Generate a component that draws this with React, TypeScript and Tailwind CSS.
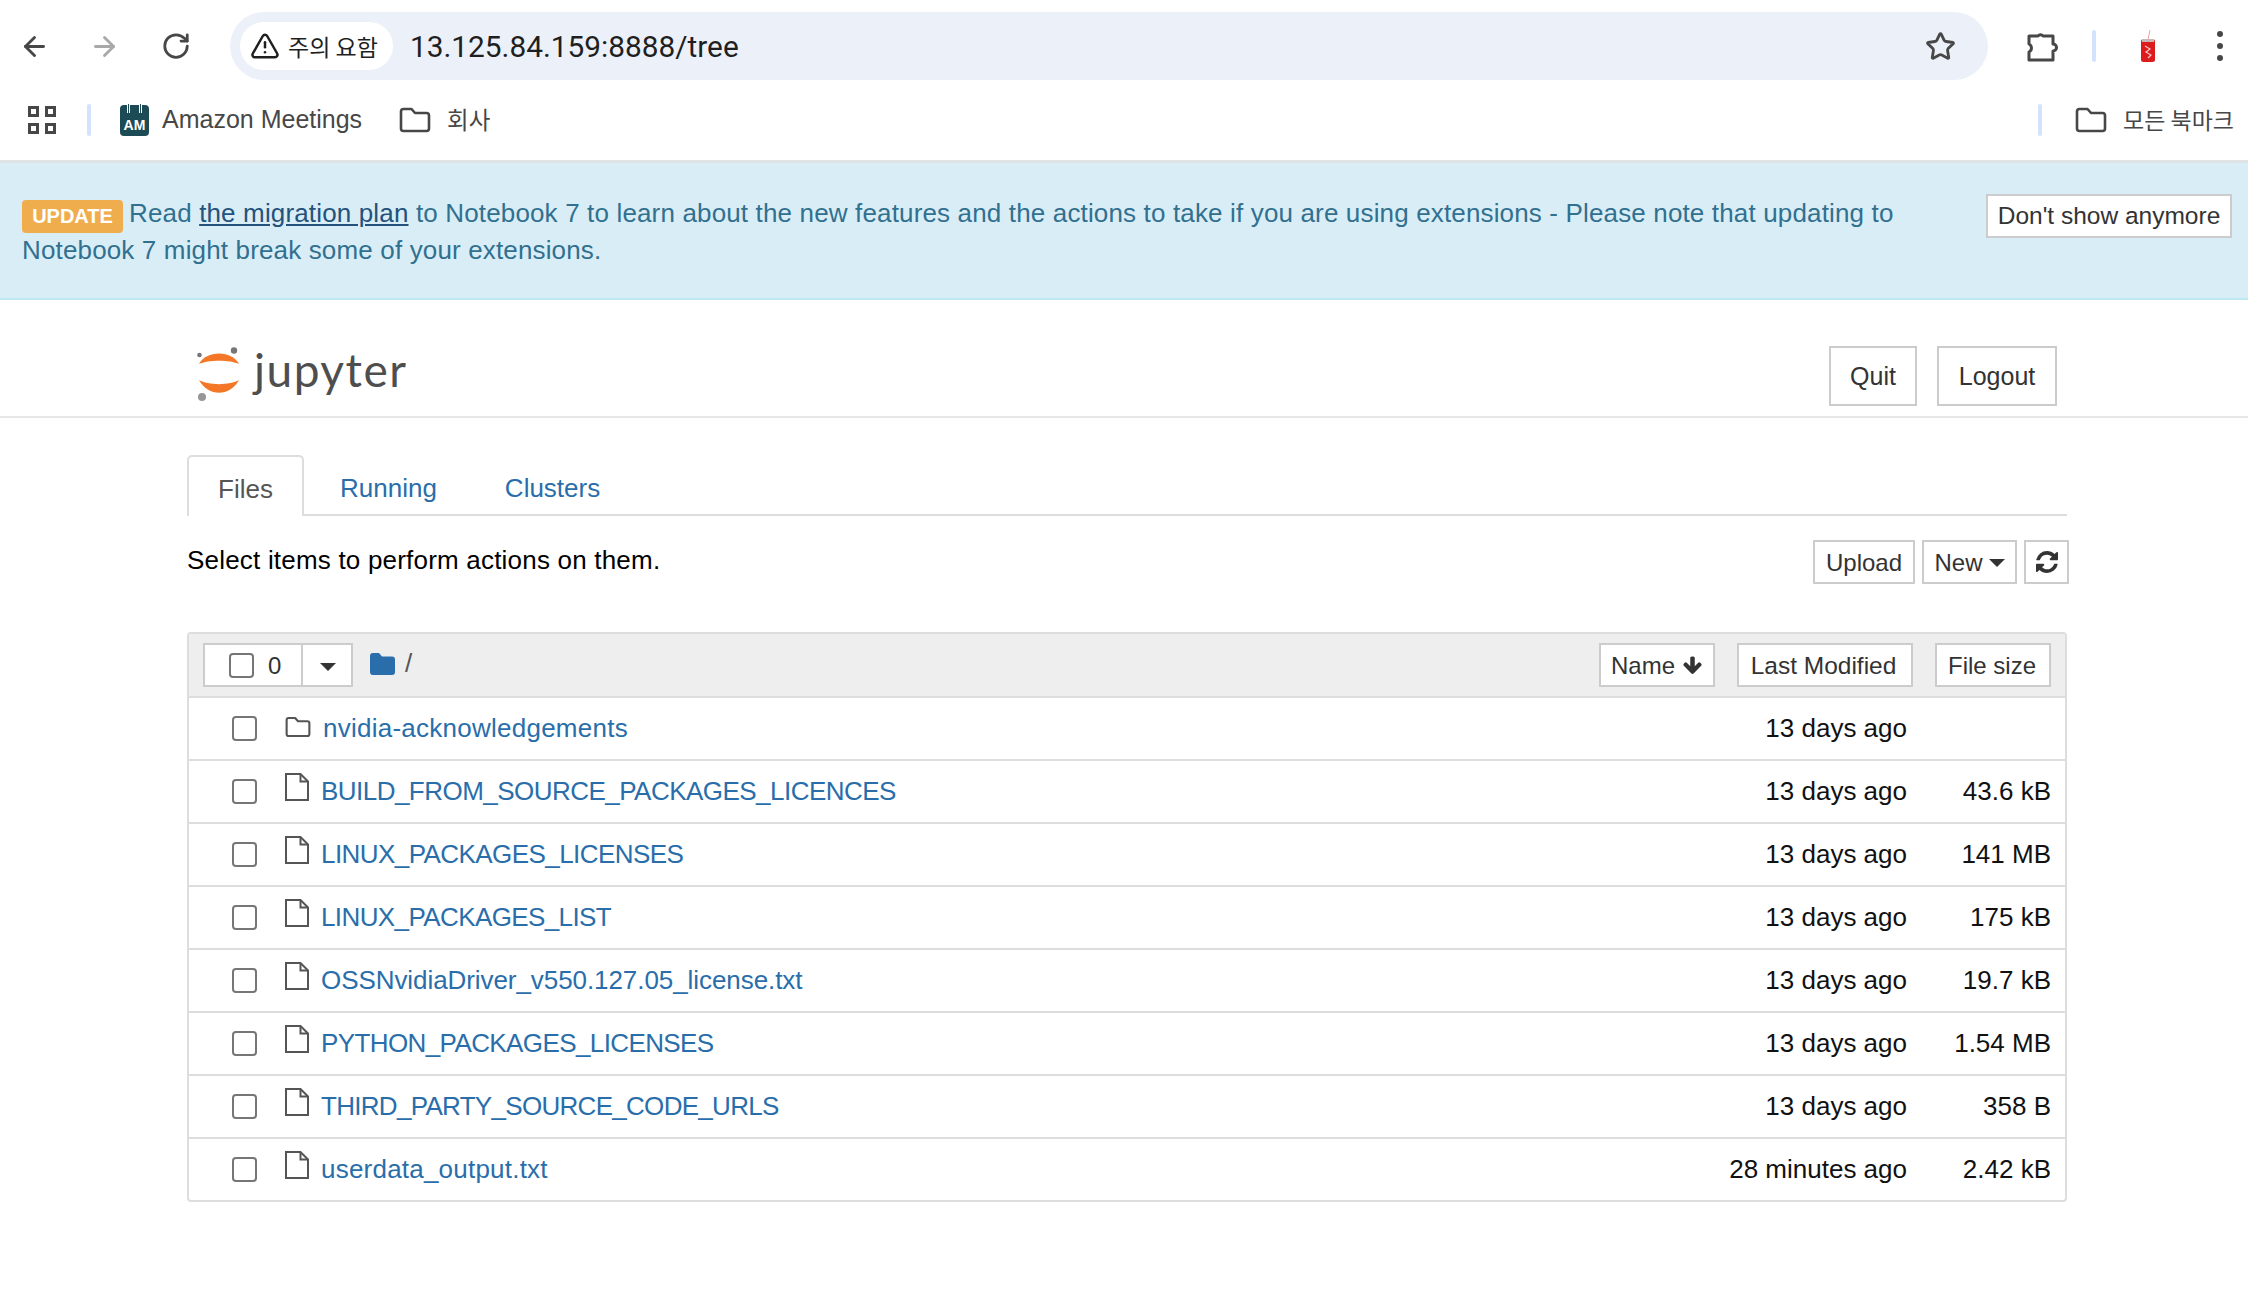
import { ArrowLeft, ArrowRight, RotateCw, TriangleAlert, Star } from 'lucide-react';

const rows = [
  { name: 'nvidia-acknowledgements', dir: true, modified: '13 days ago', size: '', fit: 'tracking-[0.25px]' },
  { name: 'BUILD_FROM_SOURCE_PACKAGES_LICENCES', modified: '13 days ago', size: '43.6 kB', fit: 'tracking-[-0.53px]' },
  { name: 'LINUX_PACKAGES_LICENSES', modified: '13 days ago', size: '141 MB', fit: 'tracking-[-0.56px]' },
  { name: 'LINUX_PACKAGES_LIST', modified: '13 days ago', size: '175 kB', fit: 'tracking-[-0.6px]' },
  { name: 'OSSNvidiaDriver_v550.127.05_license.txt', modified: '13 days ago', size: '19.7 kB', fit: 'tracking-[-0.07px]' },
  { name: 'PYTHON_PACKAGES_LICENSES', modified: '13 days ago', size: '1.54 MB', fit: 'tracking-[-0.6px]' },
  { name: 'THIRD_PARTY_SOURCE_CODE_URLS', modified: '13 days ago', size: '358 B', fit: 'tracking-[-0.7px]' },
  { name: 'userdata_output.txt', modified: '28 minutes ago', size: '2.42 kB', fit: 'tracking-[0.22px]' },
];

function FolderOutline({ className }: { className: string }) {
  return (
    <svg className={className} viewBox="0 0 32 26" fill="none" stroke="currentColor" strokeWidth="2.6" strokeLinejoin="round">
      <path d="M2 4.500a2.500 2.500 0 0 1 2.500-2.500h8l3.500 4h11.500a2.500 2.500 0 0 1 2.500 2.500v13a2.500 2.500 0 0 1-2.500 2.500h-23a2.500 2.500 0 0 1-2.500-2.500z" />
    </svg>
  );
}

function FileOutline() {
  return (
    <svg className="w-[24px] h-[28px] text-[#555]" viewBox="0 0 24 28" fill="none" stroke="currentColor" strokeWidth="2" strokeLinejoin="miter">
      <path d="M1 1h14.500l7.500 7.500v18.500h-22z" />
      <path d="M15.500 1v7.500h7.500" />
    </svg>
  );
}

function Checkbox() {
  return <span className="block w-[25px] h-[25px] rounded-[4px] border-2 border-[#767676] bg-white shrink-0" />;
}

function Caret({ className }: { className: string }) {
  return <span className={`block w-0 h-0 border-x-[8px] border-x-transparent border-t-[8px] border-t-[#333] ${className}`} />;
}

function JupyterMark() {
  return (
    <svg className="w-[46px] h-[56px]" viewBox="0 0 46 56">
      <path d="M3 17C10 3 36 3 43 17C34 12.500 12 12.500 3 17Z" fill="#f37726" />
      <path d="M3 33C12 50 34 50 43 33C34 38.500 12 38.500 3 33Z" fill="#f37726" />
      <circle cx="38" cy="3.500" r="3.200" fill="#767677" />
      <circle cx="3.500" cy="8" r="2.300" fill="#767677" />
      <circle cx="6" cy="50" r="4" fill="#989798" />
    </svg>
  );
}

export default function App() {
  return (
    <div className="w-[2248px] h-[1300px] bg-white overflow-hidden font-['Liberation_Sans','Noto_Sans_CJK_KR',sans-serif] text-[26px] leading-[37px] text-black">
      {/* browser chrome */}
      <div className="h-[92px] flex items-center text-[#474747]">
        <ArrowLeft className="ml-[19px] w-[31px] h-[31px]" strokeWidth={2.2} />
        <ArrowRight className="ml-[39px] w-[31px] h-[31px] text-[#a9a9a9]" strokeWidth={2.2} />
        <RotateCw className="ml-[41px] w-[30px] h-[30px]" strokeWidth={2.2} />
        <div className="ml-[39px] shrink-0 w-[1758px] h-[68px] rounded-full bg-[#ecf1f9] flex items-center pl-[10px] pr-[32px]">
          <div className="h-[48px] w-[153px] rounded-full bg-white flex items-center pl-[10px] gap-[8px] text-[23px] text-[#1f1f1f] font-['Noto_Sans_CJK_KR',sans-serif]">
            <TriangleAlert className="w-[30px] h-[30px]" strokeWidth={2} />
            <span>주의 요함</span>
          </div>
          <span className="ml-[17px] text-[29.8px] text-[#1f1f1f] font-['Roboto',sans-serif]">13.125.84.159:8888/tree</span>
          <Star className="ml-auto w-[31px] h-[31px]" strokeWidth={2.2} />
        </div>
        <svg className="ml-[38px] w-[33px] h-[33px] shrink-0" viewBox="0 0 33 33" fill="none" stroke="currentColor" strokeWidth="3" strokeLinejoin="round">
          <path d="M3 6H12a3 3 0 0 1 5 0H27V14a3.500 3.500 0 0 1 0 7V30H3V22a4.500 4.500 0 0 0 0-8Z" />
        </svg>
        <span className="ml-[33px] w-[4px] h-[32px] rounded-full bg-[#d3e3fd] shrink-0" />
        <svg className="ml-[43px] w-[18px] h-[34px] shrink-0" viewBox="0 0 18 34">
          <path d="M9 11L11 1" stroke="#f4a0a0" strokeWidth="1" />
          <rect x="2" y="10" width="14" height="23" rx="2.500" fill="#dc1c1c" />
          <rect x="3" y="10" width="12" height="3" fill="#c9b7b7" />
          <path d="M6 17l5 3-4 3 5 3-3 3" stroke="#f7c6c6" strokeWidth="1.200" fill="none" />
        </svg>
        <div className="ml-[60px] flex flex-col gap-[6px] shrink-0">
          <span className="w-[6px] h-[6px] rounded-full bg-[#474747]" />
          <span className="w-[6px] h-[6px] rounded-full bg-[#474747]" />
          <span className="w-[6px] h-[6px] rounded-full bg-[#474747]" />
        </div>
      </div>

      {/* bookmarks bar */}
      <div className="h-[68px] flex items-center text-[#474747] text-[25px] pb-[12px]">
        <div className="ml-[28px] grid grid-cols-2 gap-[6px]">
          <span className="w-[11px] h-[11px] border-[3px] border-[#474747]" />
          <span className="w-[11px] h-[11px] border-[3px] border-[#474747]" />
          <span className="w-[11px] h-[11px] border-[3px] border-[#474747]" />
          <span className="w-[11px] h-[11px] border-[3px] border-[#474747]" />
        </div>
        <span className="ml-[31px] w-[4px] h-[32px] rounded-full bg-[#d3e3fd]" />
        <div className="ml-[29px] relative w-[29px] h-[31px] rounded-[4px] bg-[#1d4b55] flex items-end justify-center">
          <span className="text-[14px] leading-[21px] font-bold text-white">AM</span>
          <span className="absolute -top-[1px] left-[7px] w-[3px] h-[9px] bg-[#1d4b55] border-x border-white" />
          <span className="absolute -top-[1px] right-[7px] w-[3px] h-[9px] bg-[#1d4b55] border-x border-white" />
        </div>
        <span className="ml-[13px] -mt-[2px]">Amazon Meetings</span>
        <FolderOutline className="ml-[37px] w-[32px] h-[26px]" />
        <span className="ml-[16px] -mt-[2px] font-['Noto_Sans_CJK_KR',sans-serif] text-[23.5px]">회사</span>
        <span className="ml-auto w-[4px] h-[32px] rounded-full bg-[#d3e3fd]" />
        <FolderOutline className="ml-[33px] w-[32px] h-[26px]" />
        <span className="ml-[16px] mr-[14px] -mt-[2px] font-['Noto_Sans_CJK_KR',sans-serif] text-[23px]">모든 북마크</span>
      </div>

      {/* update banner */}
      <div className="h-[140px] border-t-[3px] border-t-[#dfe3e3] border-b-2 border-b-[#bce8f1] bg-[#d9edf7] text-[#31708f] flex items-start justify-between pl-[22px] pr-[16px] pt-[32px]">
        <p className="w-[1930px] tracking-[0.15px]">
          <span className="inline-block w-[101px] h-[33px] -my-[5px] mr-[6px] rounded-[4px] bg-[#f0ad4e] text-white text-[20px] leading-[33px] tracking-normal font-bold text-center align-[-1px]">UPDATE</span>
          Read <a className="underline text-[#23527c]">the migration plan</a> to Notebook 7 to learn about the new features and the actions to take if you are using extensions - Please note that updating to Notebook 7 might break some of your extensions.
        </p>
        <button className="-mt-[1px] h-[44px] w-[246px] border-2 border-[#ccc] bg-white text-[#333] text-[24.5px] leading-[34px]">Don't show anymore</button>
      </div>

      {/* header */}
      <div className="h-[118px] border-b-2 border-b-[#e7e7e7] flex items-start pl-[196px] pr-[191px]">
        <div className="flex items-center mt-[47px]">
          <JupyterMark />
          <span className="ml-[12px] -mt-[10px] font-['Lato',sans-serif] text-[46px] leading-[56px] tracking-[1.5px] text-[#4e4e4e]">jupyter</span>
        </div>
        <button className="ml-auto mt-[46px] h-[60px] w-[88px] border-2 border-[#ccc] text-[#333] text-[25px]">Quit</button>
        <button className="ml-[20px] mt-[46px] h-[60px] w-[120px] border-2 border-[#ccc] text-[#333] text-[25px]">Logout</button>
      </div>

      {/* main */}
      <div className="w-[1882px] ml-[187px]">
        <div className="mt-[37px] h-[61px] border-b-2 border-b-[#ddd] flex w-[1880px]">
          <div className="w-[117px] h-[61px] border-2 border-b-0 border-[#ddd] rounded-t-[5px] bg-white text-[#555] flex items-center justify-center pt-[6px]">Files</div>
          <a className="ml-[36px] text-[#296eaa] flex items-center pt-[8px] h-[59px]">Running</a>
          <a className="ml-[68px] text-[#296eaa] flex items-center pt-[8px] h-[59px]">Clusters</a>
        </div>
        <div className="mt-[24px] h-[44px] flex items-start">
          <span className="mt-[2px] tracking-[0.2px]">Select items to perform actions on them.</span>
          <button className="ml-auto h-[44px] w-[102px] border-2 border-[#ccc] text-[#333] text-[24px]">Upload</button>
          <button className="ml-[7px] h-[44px] w-[95px] border-2 border-[#ccc] text-[#333] text-[24px] flex items-center justify-center gap-[6px]">New<Caret className="mt-[2px]" /></button>
          <button className="ml-[7px] h-[44px] w-[45px] border-2 border-[#ccc] text-[#333] flex items-center justify-center">
            <svg className="w-[22px] h-[22px]" viewBox="0 0 1536 1536" fill="currentColor">
              <path d="M1511 928q0 5-1 7-64 268-268 434.500t-478 166.500q-146 0-282.500-55t-243.500-157l-129 129q-19 19-45 19t-45-19-19-45v-448q0-26 19-45t45-19h448q26 0 45 19t19 45-19 45l-137 137q71 66 161 102t187 36q134 0 250-65t186-179q11-17 53-117 8-23 30-23h192q13 0 22.500 9.500t9.500 22.500zm25-800v448q0 26-19 45t-45 19h-448q-26 0-45-19t-19-45 19-45l138-138q-148-137-349-137-134 0-250 65t-186 179q-11 17-53 117-8 23-30 23h-199q-13 0-22.500-9.500t-9.500-22.500v-7q65-268 270-434.500t480-166.500q146 0 284 55.500t245 156.500l130-129q19-19 45-19t45 19 19 45z" />
            </svg>
          </button>
        </div>

        {/* file list */}
        <div className="mt-[48px] w-[1880px] border-2 border-[#ddd] rounded-[4px]">
          <div className="h-[64px] bg-[#eee] flex items-center pl-[14px] pr-[14px] border-b-2 border-b-[#ddd] text-[24px] text-[#333]">
            <div className="h-[44px] w-[150px] border-2 border-[#ccc] bg-white flex items-center">
              <div className="w-[98px] flex items-center pl-[24px] gap-[14px] border-r-2 border-r-[#ccc] h-full">
                <Checkbox />
                <span>0</span>
              </div>
              <Caret className="ml-[17px] mt-[4px]" />
            </div>
            <svg className="ml-[17px] -mt-[3px] w-[25px] h-[22px] text-[#296eaa]" viewBox="0 0 25 22" fill="currentColor">
              <path d="M0 3a3 3 0 0 1 3-3h6l3 3.500h10a3 3 0 0 1 3 3v12.500a3 3 0 0 1-3 3h-19a3 3 0 0 1-3-3z" />
            </svg>
            <span className="ml-[10px] -mt-[3px] text-[#555] text-[26px]">/</span>
            <button className="ml-auto h-[44px] w-[116px] border-2 border-[#ccc] bg-white flex items-center justify-center gap-[7px] -translate-x-[1px]">
              Name
              <svg className="w-[21px] h-[21px] mt-[1px]" viewBox="0 0 1792 1792" fill="currentColor">
                <path d="M1675 832q0 53-37 90l-651 652q-39 37-91 37-53 0-90-37l-651-652q-38-36-38-90 0-53 38-91l74-75q39-37 91-37 53 0 90 37l294 294v-704q0-52 38-90t90-38h128q52 0 90 38t38 90v704l294-294q37-37 90-37 52 0 91 37l75 75q37 39 37 91z" />
              </svg>
            </button>
            <button className="ml-[21px] h-[44px] w-[176px] border-2 border-[#ccc] bg-white pr-[3px] text-[24.5px]">Last Modified</button>
            <button className="ml-[22px] h-[44px] w-[116px] border-2 border-[#ccc] bg-white pr-[2px]">File size</button>
          </div>
          {rows.map((row, i) => (
            <div key={row.name} className={`flex items-center pl-[43px] pr-[14px] ${i < rows.length - 1 ? 'h-[63px] border-b-2 border-b-[#ddd]' : 'h-[61px]'}`}>
              <Checkbox />
              <span className={`ml-[28px] w-[27px] flex ${row.dir ? '-mt-[3px]' : '-mt-[10px]'}`}>
                {row.dir ? <FolderOutline className="w-[26px] h-[22px] text-[#555]" /> : <FileOutline />}
              </span>
              <a className={`text-[#296eaa] ${row.fit} ${row.dir ? 'ml-[11px]' : 'ml-[9px]'}`}>{row.name}</a>
              <span className="ml-auto text-[#111]">{row.modified}</span>
              <span className="w-[144px] text-right text-[#111]">{row.size}</span>
            </div>
          ))}
        </div>
      </div>
    </div>
  );
}
